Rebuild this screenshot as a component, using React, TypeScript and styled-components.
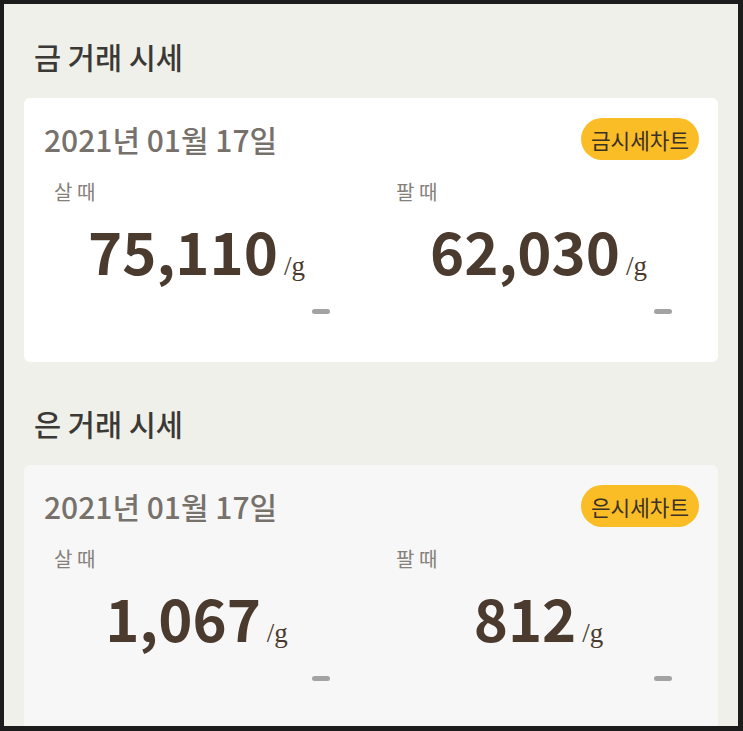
import styled, { createGlobalStyle } from "styled-components";

const GlobalStyle = createGlobalStyle`
  html, body {
    margin: 0;
    padding: 0;
    background: #1c1c1c;
  }
  body {
    font-family: "Noto Sans CJK KR", "Noto Sans", sans-serif;
  }
`;

const Frame = styled.div`
  margin: 4px 5px 0 4px;
  height: 722px;
  overflow: hidden;
  background: #f0f0eb;
`;

const Section = styled.section`
  padding: 0 20px 9px;
`;

const SectionTitle = styled.h2`
  margin: 0;
  height: 84px;
  padding-top: 10px;
  display: flex;
  align-items: center;
  padding-left: 10px;
  font-size: 29.5px;
  font-weight: 500;
  color: #3b3935;
`;

const Card = styled.div<{ $muted?: boolean }>`
  background: ${(p) => (p.$muted ? "#f7f7f7" : "#ffffff")};
  border-radius: 6px;
  padding: 19px 19px 0 20px;
  height: 264px;
  box-sizing: border-box;
`;

const CardHeader = styled.div`
  display: flex;
  justify-content: space-between;
  align-items: center;
`;

const DateText = styled.div`
  font-size: 30px;
  font-weight: 500;
  color: #77716b;
`;

const ChartButton = styled.button`
  border: none;
  background: #fbbd25;
  color: #3a3128;
  font-family: inherit;
  font-size: 21.3px;
  height: 42px;
  padding: 0 10px;
  border-radius: 21px;
  cursor: pointer;
`;

const PriceRow = styled.div`
  display: grid;
  grid-template-columns: 1fr 1fr;
  column-gap: 57px;
  padding: 0 18px 0 10px;
  margin-top: 18px;
`;

const PriceCol = styled.div`
  display: flex;
  flex-direction: column;
`;

const PriceLabel = styled.div`
  font-size: 20px;
  color: #85807a;
  line-height: 26px;
`;

const PriceValue = styled.div`
  display: flex;
  justify-content: center;
  align-items: baseline;
  gap: 6px;
  margin-top: 3px;
  line-height: 85px;
`;

const Amount = styled.span`
  font-size: 58px;
  font-weight: 700;
  color: #4a3b2e;
`;

const Unit = styled.span`
  font-family: "Liberation Serif", serif;
  font-size: 27px;
  color: #4a3b2e;
`;

const Change = styled.div`
  align-self: flex-end;
  margin-right: 9px;
  width: 18px;
  height: 5px;
  border-radius: 3px;
  background: #a3a3a3;
`;

type Price = { label: string; amount: string };

type Market = {
  title: string;
  date: string;
  chart: string;
  muted?: boolean;
  prices: Price[];
};

const markets: Market[] = [
  {
    title: "금 거래 시세",
    date: "2021년 01월 17일",
    chart: "금시세차트",
    prices: [
      { label: "살 때", amount: "75,110" },
      { label: "팔 때", amount: "62,030" },
    ],
  },
  {
    title: "은 거래 시세",
    date: "2021년 01월 17일",
    chart: "은시세차트",
    muted: true,
    prices: [
      { label: "살 때", amount: "1,067" },
      { label: "팔 때", amount: "812" },
    ],
  },
];

const App: React.FC = () => {
  return (
    <>
      <GlobalStyle />
      <Frame>
        {markets.map((m) => (
          <Section key={m.title}>
            <SectionTitle>{m.title}</SectionTitle>
            <Card $muted={m.muted}>
              <CardHeader>
                <DateText>{m.date}</DateText>
                <ChartButton>{m.chart}</ChartButton>
              </CardHeader>
              <PriceRow>
                {m.prices.map((p) => (
                  <PriceCol key={p.label}>
                    <PriceLabel>{p.label}</PriceLabel>
                    <PriceValue>
                      <Amount>{p.amount}</Amount>
                      <Unit>/g</Unit>
                    </PriceValue>
                    <Change />
                  </PriceCol>
                ))}
              </PriceRow>
            </Card>
          </Section>
        ))}
      </Frame>
    </>
  );
};

export default App;
